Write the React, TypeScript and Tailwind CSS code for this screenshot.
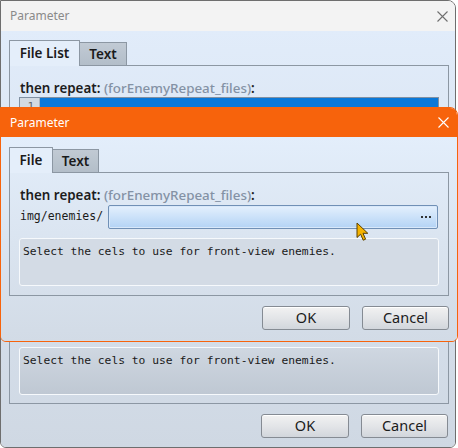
import React from "react";

const sans = { fontFamily: '"Noto Sans", "Liberation Sans", sans-serif' };
const mono = { fontFamily: '"DejaVu Sans Mono", "Liberation Mono", monospace' };

function XIcon({ color }: { color: string }) {
  return (
    <svg width="11" height="11" viewBox="0 0 11 11" className="block">
      <path d="M0.5 0.5 L10.5 10.5 M10.5 0.5 L0.5 10.5" stroke={color} strokeWidth="1.1" />
    </svg>
  );
}

function Btn({ label, w }: { label: string; w: string }) {
  return (
    <div
      className={`${w} h-[24px] flex items-center justify-center rounded-[3px] border border-[#858b93] bg-gradient-to-b from-[#f2f2f2] via-[#e3e5e8] to-[#d2d6dc] text-[14.5px] text-[#1b1b1b] shadow-[inset_0_1px_0_#ffffff]`}
    >
      {label}
    </div>
  );
}

function Label() {
  return (
    <div className="h-[18px] leading-[18px] text-[13.4px] font-semibold text-[#1c1c1c] pl-[1px]">
      then repeat: <span className="text-[#8492a5] font-medium">(forEnemyRepeat_files)</span>:
    </div>
  );
}

function Desc({ back }: { back?: boolean }) {
  return (
    <div
      className={`h-[48px] rounded-[3px] border border-[#f6f9fc] pl-[3px] pt-[5px] text-[11.3px] leading-[16px] text-[#1a1a1a] ${
        back ? "bg-gradient-to-b from-[#cfd7e1] to-[#bfc8d3]" : "bg-[#d3dbe5]"
      }`}
      style={mono}
    >
      Select the cels to use for front-view enemies.
    </div>
  );
}

function Tabs({ a, aw, bw }: { a: string; aw: string; bw: string }) {
  return (
    <div className="flex items-end h-[26px] relative z-10 -mb-px">
      <div
        className={`${aw} h-[26px] flex items-center justify-center border border-b-0 border-[#8c97a3] bg-[#e4eefa] text-[13.5px] font-semibold text-[#1a1a1a] rounded-t-[1px]`}
      >
        {a}
      </div>
      <div
        className={`${bw} h-[24px] flex items-center justify-center border border-l-0 border-[#8c97a3] bg-gradient-to-b from-[#c1cad4] to-[#b3bec9] text-[13.5px] font-semibold text-[#1a1a1a]`}
      >
        Text
      </div>
    </div>
  );
}

export default function App() {
  return (
    <div className="relative w-[458px] h-[448px] bg-white overflow-hidden" style={sans}>
      {/* Back dialog */}
      <div className="w-[456px] h-[448px] flex flex-col border border-[#6e6e6e] rounded-tr-[8px] rounded-b-[6px] overflow-hidden">
        <div className="h-[30px] shrink-0 bg-[#f3f3f3] flex items-center justify-between pl-[9px] pr-[7px]">
          <span className="text-[12px] text-[#8a8a8a]">Parameter</span>
          <XIcon color="#6f6f6f" />
        </div>
        <div className="flex-1 flex flex-col bg-gradient-to-b from-[#e1ecfa] to-[#cfd8e3] pl-[8px] pr-[6px] pt-[9px]">
          <Tabs a="File List" aw="w-[71px]" bw="w-[47px]" />
          <div className="h-[339px] border border-[#8c97a3] pt-[13px] px-[9px] flex flex-col">
            <Label />
            <div className="h-[240px] border border-[#8090a2] flex bg-[#eef2f6]">
              <div className="w-[20px] bg-[#d3dae2] border-r border-[#aab4bf] text-[11px] text-[#666] text-right pr-[5px] leading-[18px]" style={mono}>
                1
              </div>
              <div className="flex-1">
                <div className="h-[18px] bg-[#0a78d8]" />
              </div>
            </div>
            <div className="mt-[10px]">
              <Desc back />
            </div>
          </div>
          <div className="flex justify-end gap-[12px] mt-[10px] pr-[1px]">
            <Btn label="OK" w="w-[88px]" />
            <Btn label="Cancel" w="w-[87px]" />
          </div>
        </div>
      </div>

      {/* Front dialog */}
      <div className="absolute left-0 top-[107px] w-[458px] h-[235px] flex flex-col border border-[#f7630c] rounded-tr-[8px] rounded-b-[6px] overflow-hidden">
        <div className="h-[29px] shrink-0 bg-[#f7630c] flex items-center justify-between pl-[9px] pr-[8px]">
          <span className="text-[12px] text-white">Parameter</span>
          <XIcon color="#ffffff" />
        </div>
        <div className="flex-1 flex flex-col bg-gradient-to-b from-[#e3eefb] to-[#d2dbe6] pl-[8px] pr-[8px] pt-[10px]">
          <Tabs a="File" aw="w-[44px]" bw="w-[46px]" />
          <div className="h-[124px] border border-[#8c97a3] pt-[13px] pl-[9px] pr-[9px] flex flex-col">
            <Label />
            <div className="flex items-center mt-[1px] h-[24px] pr-[1px]">
              <div className="w-[89px] pl-[1px] text-[11.5px] text-[#1a1a1a]" style={mono}>
                img/enemies/
              </div>
              <div className="relative flex-1 h-[24px] rounded-[2px] border border-[#7090b6] bg-gradient-to-b from-[#e4f0fd] to-[#b3d3f5] shadow-[inset_0_0_0_1px_#d8e8fa]">
                <div className="absolute right-[6px] top-[10px] flex gap-[2px]">
                  <div className="w-[2px] h-[2px] bg-[#333]" />
                  <div className="w-[2px] h-[2px] bg-[#333]" />
                  <div className="w-[2px] h-[2px] bg-[#333]" />
                </div>
              </div>
            </div>
            <div className="mt-[9px]">
              <Desc />
            </div>
          </div>
          <div className="flex justify-end gap-[12px] mt-[10px]">
            <Btn label="OK" w="w-[88px]" />
            <Btn label="Cancel" w="w-[87px]" />
          </div>
        </div>
      </div>

      {/* Mouse cursor */}
      <svg className="absolute left-[356px] top-[222px]" width="14" height="20" viewBox="0 0 14 20">
        <path
          d="M1 1 L1 15.5 L4.6 12.2 L7.2 18.2 L9.6 17.2 L7 11.3 L11.8 11.3 Z"
          fill="#f5b300"
          stroke="#5a4000"
          strokeWidth="1"
          strokeLinejoin="round"
        />
      </svg>
    </div>
  );
}
